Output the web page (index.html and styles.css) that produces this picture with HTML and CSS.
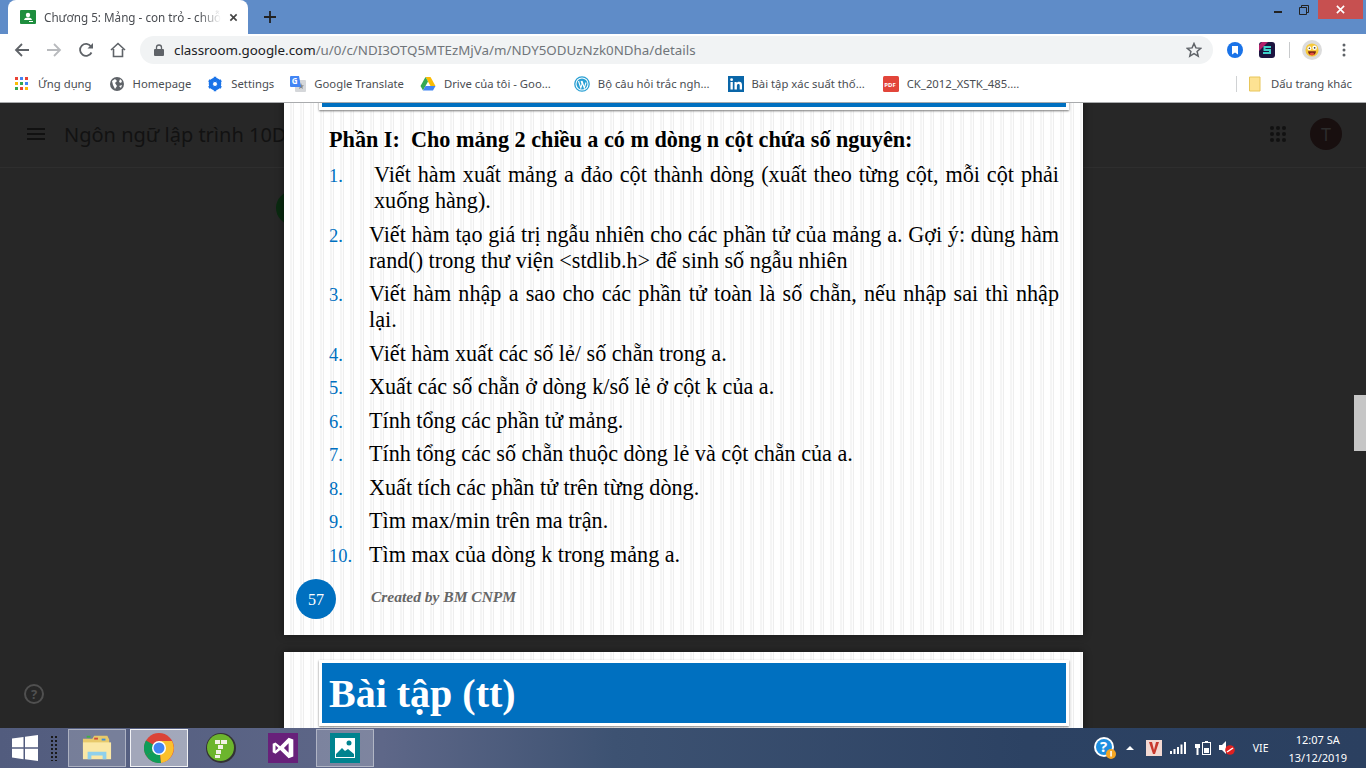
FILE: index.html
```html
<!DOCTYPE html>
<html lang="vi">

<head>
    <meta charset="UTF-8">
    <title>Chương 5: Mảng - con trỏ - chuỗi</title>
    <link rel="stylesheet" href="styles.css">
</head>

<body>
    <div class="tabstrip">
        <div class="tab">
            <svg class="ic16" viewBox="0 0 16 16"><rect width="16" height="14" y="1" rx="1" fill="#1e8e3e"/><circle cx="8" cy="6" r="2.2" fill="#fff"/><path d="M4 11c.5-2 2-2.6 4-2.6s3.500.6 4 2.600z" fill="#fff"/><rect x="9" y="12" width="4" height="1" fill="#fff"/></svg>
            <span class="tab-title">Chương 5: Mảng - con trỏ - chuỗ</span>
            <svg class="tab-x" viewBox="0 0 10 10"><path d="M1.500 1.500l7 7M8.500 1.500l-7 7" stroke="#444" stroke-width="1.800"/></svg>
        </div>
        <svg class="new-tab" viewBox="0 0 12 12"><path d="M6 0v12M0 6h12" stroke="#222" stroke-width="1.800"/></svg>
        <div class="win-btns">
            <svg class="win-min" viewBox="0 0 8 2"><rect width="8" height="2" fill="#222"/></svg>
            <svg class="win-max" viewBox="0 0 10 10"><path d="M.5 2.500h7v7h-7zM2.500 2.500v-2h7v7h-2" fill="none" stroke="#222"/></svg>
            <div class="win-close"><svg viewBox="0 0 10 10"><path d="M1 1l8 8M9 1l-8 8" stroke="#fff" stroke-width="1.800"/></svg></div>
        </div>
    </div>

    <div class="toolbar">
        <svg class="nav" viewBox="0 0 16 16"><path d="M15 8H2M8 2L2 8l6 6" fill="none" stroke="#5f6368" stroke-width="1.800"/></svg>
        <svg class="nav" viewBox="0 0 16 16"><path d="M1 8h13M8 2l6 6-6 6" fill="none" stroke="#b8babd" stroke-width="1.800"/></svg>
        <svg class="nav" viewBox="0 0 16 16"><path d="M13.500 10.500A6 6 0 1 1 13 4.500" fill="none" stroke="#5f6368" stroke-width="1.800"/><path d="M15 1v5.500H9.500z" fill="#5f6368"/></svg>
        <svg class="nav" viewBox="0 0 16 16"><path d="M1 8l7-6.500L15 8M3.500 7v7.500h9V7" fill="none" stroke="#5f6368" stroke-width="1.600"/></svg>
        <div class="omnibox">
            <svg class="lock" viewBox="0 0 10 12"><path d="M2.500 5V3.500a2.500 2.500 0 0 1 5 0V5" fill="none" stroke="#5f6368" stroke-width="1.300"/><rect y="5" width="10" height="7" rx="1" fill="#5f6368"/></svg>
            <span class="url"><b>classroom.google.com</b>/u/0/c/NDI3OTQ5MTEzMjVa/m/NDY5ODUzNzk0NDha/details</span>
            <svg class="star" viewBox="0 0 16 16"><path d="M8 1.500l1.900 4.400 4.800.4-3.600 3.100 1.100 4.700L8 11.600l-4.200 2.500 1.100-4.700L1.300 6.300l4.800-.4z" fill="none" stroke="#5f6368" stroke-width="1.500"/></svg>
        </div>
        <svg class="ext ext-first" viewBox="0 0 16 16"><circle cx="8" cy="8" r="8" fill="#1a73e8"/><path d="M5 4h6v8.500l-3-2-3 2z" fill="#fff"/></svg>
        <svg class="ext" viewBox="0 0 16 16"><rect width="16" height="16" rx="3" fill="#1c1440"/><path d="M0 3l3-3h6L0 9z" fill="#b3206a"/><path d="M12 5H5.500v3H11v3H4" fill="none" stroke="#3fd0c9" stroke-width="2"/></svg>
        <div class="tool-sep"></div>
        <div class="avatar">
            <svg viewBox="0 0 16 16"><circle cx="8" cy="8" r="7.500" fill="#f6c83a"/><circle cx="5" cy="6" r="2.200" fill="#fff"/><circle cx="11" cy="5.500" r="2.600" fill="#fff"/><circle cx="5" cy="6" r=".9" fill="#333"/><circle cx="11" cy="5.500" r="1" fill="#333"/><path d="M3.500 9.500h9c0 3-2 4.500-4.500 4.500s-4.500-1.500-4.500-4.500z" fill="#7a2418"/><ellipse cx="8" cy="12.500" rx="2.500" ry="1.500" fill="#e8503c"/></svg>
        </div>
        <svg class="dots" viewBox="0 0 4 14"><circle cx="2" cy="2" r="1.500" fill="#5f6368"/><circle cx="2" cy="7" r="1.500" fill="#5f6368"/><circle cx="2" cy="12" r="1.500" fill="#5f6368"/></svg>
    </div>

    <div class="bookmarks">
        <div class="bm bm-apps">
            <svg class="ic14" viewBox="0 0 14 14"><g id="app-dots"><rect width="3" height="3" fill="#ea4335"/><rect x="5" width="3" height="3" fill="#4285f4"/><rect x="10" width="3" height="3" fill="#ea4335"/><rect y="5" width="3" height="3" fill="#fbbc05"/><rect x="5" y="5" width="3" height="3" fill="#34a853"/><rect x="10" y="5" width="3" height="3" fill="#4285f4"/><rect y="10" width="3" height="3" fill="#34a853"/><rect x="5" y="10" width="3" height="3" fill="#ea4335"/><rect x="10" y="10" width="3" height="3" fill="#fbbc05"/></g></svg>
            <span>Ứng dụng</span>
        </div>
        <div class="bm bm-home">
            <svg class="ic16" viewBox="0 0 16 16"><circle cx="8" cy="8" r="7" fill="#5f6368"/><path d="M3 5l3-2 2 2-2 2 2 3-2 3-2-4zM11 3l2 2-1 2-2-1zM10 10l3-1-1 3z" fill="#fff"/></svg>
            <span>Homepage</span>
        </div>
        <div class="bm bm-settings">
            <svg class="ic16" viewBox="0 0 16 16"><circle cx="8" cy="8" r="4.500" fill="none" stroke="#1a73e8" stroke-width="3.500"/><path d="M8 .8v14.400M1.800 4.400l12.400 7.200M14.200 4.400L1.800 11.600" stroke="#1a73e8" stroke-width="2.600"/><circle cx="8" cy="8" r="2" fill="#fff"/></svg>
            <span>Settings</span>
        </div>
        <div class="bm bm-translate">
            <svg class="ic16" viewBox="0 0 16 16"><rect x="5" y="4" width="11" height="12" rx="1" fill="#d5d7da"/><path d="M11 7l.8 2.200 2.200.2-1.700 1.400.6 2.200-1.900-1.200-1.900 1.200.6-2.200L8 9.400l2.200-.2z" fill="#80868b"/><path d="M1 0h8l2 11H1a1 1 0 0 1-1-1V1a1 1 0 0 1 1-1z" fill="#4285f4"/><text x="1.800" y="8" class="g-mark">G</text></svg>
            <span>Google Translate</span>
        </div>
        <div class="bm bm-drive">
            <svg class="ic16" viewBox="0 0 16 16"><path d="M5.500 1h5l5 9h-5z" fill="#fbbc05"/><path d="M5.500 1L.5 10l2.500 4.500L8 5.500z" fill="#34a853"/><path d="M3 14.500h10l2.500-4.500h-10z" fill="#4285f4"/></svg>
            <span>Drive của tôi - Goo...</span>
        </div>
        <div class="bm bm-wp">
            <svg class="ic16" viewBox="0 0 16 16"><circle cx="8" cy="8" r="7.200" fill="none" stroke="#2aa0d4" stroke-width="1.300"/><circle cx="8" cy="8" r="5.500" fill="#2aa0d4"/><path d="M4.500 5l2.300 7 1.300-4-1-3M8 5l2.300 7 1.700-5.500" fill="none" stroke="#fff" stroke-width="1.100"/></svg>
            <span>Bộ câu hỏi trắc ngh...</span>
        </div>
        <div class="bm bm-in">
            <svg class="ic16" viewBox="0 0 16 16"><rect width="16" height="16" fill="#0a66a8"/><rect x="2.500" y="6" width="2.300" height="7.500" fill="#fff"/><circle cx="3.600" cy="3.700" r="1.400" fill="#fff"/><path d="M6.500 6h2.200v1.100c.5-.8 1.300-1.300 2.400-1.300 2 0 2.900 1.200 2.900 3.300v4.400h-2.300V9.600c0-1.100-.4-1.700-1.200-1.700-.9 0-1.600.6-1.600 1.800v3.800H6.500z" fill="#fff"/></svg>
            <span>Bài tập xác suất thố...</span>
        </div>
        <div class="bm bm-pdf">
            <svg class="ic16" viewBox="0 0 16 16"><rect width="16" height="16" rx="1.500" fill="#e2453a"/><text x="1.300" y="10.500" class="pdf-mark">PDF</text></svg>
            <span>CK_2012_XSTK_485....</span>
        </div>
        <div class="bm-right">
            <div class="bm-sep"></div>
            <svg class="ic16 bm-folder" viewBox="0 0 12 15"><path d="M.5.500h10.500v14H.5z" fill="#fde293" stroke="#e8c65a"/></svg>
            <span>Dấu trang khác</span>
        </div>
    </div>

    <main class="page">
        <div class="backdrop">
            <div class="class-bar">
                <svg class="burger" viewBox="0 0 18 12"><path d="M0 1h18M0 6h18M0 11h18" stroke="#111" stroke-width="2"/></svg>
                <span class="class-name">Ngôn ngữ lập trình 10DHTH2</span>
                <svg class="grid-dots" viewBox="0 0 16 16"><g fill="#111"><circle cx="2" cy="2" r="2"/><circle cx="8" cy="2" r="2"/><circle cx="14" cy="2" r="2"/><circle cx="2" cy="8" r="2"/><circle cx="8" cy="8" r="2"/><circle cx="14" cy="8" r="2"/><circle cx="2" cy="14" r="2"/><circle cx="8" cy="14" r="2"/><circle cx="14" cy="14" r="2"/></g></svg>
                <div class="user-dot">T</div>
            </div>
            <div class="green-dot"></div>
            <div class="help-dot">?</div>
        </div>

        <div class="viewer">
            <section class="slide slide-one">
                <div class="slide-title"></div>
                <h2 class="part">Phần I:&nbsp; Cho mảng 2 chiều a có m dòng n cột chứa số nguyên:</h2>
                <ol class="tasks">
                    <li class="task-first"><span class="num">1.</span><span>Viết hàm xuất mảng a đảo cột thành dòng (xuất theo từng cột, mỗi cột phải xuống hàng).</span></li>
                    <li><span class="num">2.</span><span>Viết hàm tạo giá trị ngẫu nhiên cho các phần tử của mảng a. Gợi ý: dùng hàm rand() trong thư viện &lt;stdlib.h&gt; để sinh số ngẫu nhiên</span></li>
                    <li><span class="num">3.</span><span>Viết hàm nhập a sao cho các phần tử toàn là số chẵn, nếu nhập sai thì nhập lại.</span></li>
                    <li><span class="num">4.</span><span>Viết hàm xuất các số lẻ/ số chẵn trong a.</span></li>
                    <li><span class="num">5.</span><span>Xuất các số chẵn ở dòng k/số lẻ ở cột k của a.</span></li>
                    <li><span class="num">6.</span><span>Tính tổng các phần tử mảng.</span></li>
                    <li><span class="num">7.</span><span>Tính tổng các số chẵn thuộc dòng lẻ và cột chẵn của a.</span></li>
                    <li><span class="num">8.</span><span>Xuất tích các phần tử trên từng dòng.</span></li>
                    <li><span class="num">9.</span><span>Tìm max/min trên ma trận.</span></li>
                    <li><span class="num">10.</span><span>Tìm max của dòng k trong mảng a.</span></li>
                </ol>
                <div class="slide-foot">
                    <div class="page-no">57</div>
                    <span class="credit">Created by BM CNPM</span>
                </div>
            </section>
            <section class="slide slide-two">
                <h1 class="slide-head">Bài tập (tt)</h1>
            </section>
        </div>

        <div class="scroll-thumb"></div>
    </main>

    <footer class="taskbar">
        <svg class="win-logo" viewBox="0 0 26 26"><path d="M0 3.500l11.500-1.600v10.400H0zM13 1.700L26 0v12.300H13zM0 13.800h11.500v10.400L0 22.500zM13 13.800h13V26l-13-1.800z" fill="#fff"/></svg>
        <div class="gripper"></div>
        <div class="tb-item tb-open">
            <svg viewBox="0 0 32 28"><path d="M1 4h10l2-3h14l2 4v10H1z" fill="#e8c96a"/><rect x="5" y="1" width="4" height="2" fill="#3fae49"/><rect x="13" y="3" width="4" height="2" fill="#d04a3a"/><rect x="21" y="4" width="4" height="2" fill="#3f8fd8"/><path d="M1 8h30v18H1z" fill="#fbe8a6"/><path d="M6 26v-8h20v8h-4v-4H10v4z" fill="#8fd0ec"/></svg>
        </div>
        <div class="tb-item tb-active">
            <svg viewBox="0 0 30 30"><circle cx="15" cy="15" r="15" fill="#db4437"/><path d="M15 15L2 22.500A15 15 0 0 1 2 7.500z" fill="#0f9d58"/><path d="M15 15l-13 7.500A15 15 0 0 0 17 29.900z" fill="#0f9d58"/><path d="M15 8h13a15 15 0 0 1-11 21.900z" fill="#fbc02d"/><circle cx="15" cy="15" r="7" fill="#fff"/><circle cx="15" cy="15" r="5.500" fill="#4285f4"/></svg>
        </div>
        <div class="tb-item">
            <svg viewBox="0 0 30 30"><circle cx="15" cy="15" r="15" fill="#333"/><circle cx="14.500" cy="14.500" r="13.500" fill="#6cb52d"/><path d="M9 7h5v4H9zM15 7h6v4h-6zM12 12h5v4h-5zM10 17h5v4h-5zM9 22h5v3H9z" fill="#f2f2e4"/></svg>
        </div>
        <div class="tb-item">
            <svg viewBox="0 0 32 32"><rect width="32" height="32" fill="#68217a"/><path d="M22 5l5 2v18l-5 2-9-9-5 4-3-1.500v-9L8 10l5 4zM8 13v6l3-3zM22 11l-5 5 5 5z" fill="#fff" fill-rule="evenodd"/></svg>
        </div>
        <div class="tb-item tb-open">
            <svg viewBox="0 0 30 30"><rect width="30" height="30" fill="#00838f"/><rect x="5" y="5" width="20" height="20" fill="#fff"/><path d="M6 21l6-6 3 3 3-2 6 5v3H6z" fill="#00838f"/><circle cx="19" cy="10" r="2.500" fill="#00838f"/></svg>
        </div>
        <div class="tray">
            <svg class="tray-help" viewBox="0 0 24 24"><circle cx="11" cy="11" r="10" fill="#fff"/><circle cx="11" cy="11" r="8" fill="#1f8fe0"/><text x="7" y="16" class="help-mark">?</text><circle cx="18" cy="18" r="5" fill="#f5a623"/><rect x="17.300" y="15" width="1.500" height="5.500" fill="#fff"/></svg>
            <svg class="tray-up" viewBox="0 0 8 4"><path d="M0 4l4-4 4 4z" fill="#fff"/></svg>
            <svg class="tray-v" viewBox="0 0 16 16"><rect width="16" height="16" fill="#f3d9d2"/><path d="M3 2h3l2 8 2-8h3l-4 12H7z" fill="#c8392e"/></svg>
            <svg class="tray-signal" viewBox="0 0 16 12"><path d="M0 9h2v3H0zM3.500 7h2v5h-2zM7 5h2v7H7zM10.500 2.500h2V12h-2zM14 0h2v12h-2z" fill="#fff"/></svg>
            <svg class="tray-batt" viewBox="0 0 16 14"><path d="M1 0v3M4 0v3M0 3h5v4H3.500v7h-2V7H0z" fill="#fff"/><rect x="7.500" y="1.500" width="8" height="12" fill="none" stroke="#fff"/><rect x="9" y="7" width="5" height="5" fill="#fff"/><rect x="10" y="0" width="3" height="1.500" fill="#fff"/></svg>
            <svg class="tray-vol" viewBox="0 0 16 14"><path d="M0 4h3l4-4v13L3 9H0z" fill="#fff"/><circle cx="11" cy="9" r="4.800" fill="#e02020"/><path d="M8 11l6-4" stroke="#fff" stroke-width="1.500"/></svg>
            <span class="tray-lang">VIE</span>
            <div class="clock"><div>12:07 SA</div><div>13/12/2019</div></div>
        </div>
    </footer>
</body>

</html>
```

FILE: styles.css
```css
* {
    box-sizing: border-box;
}

html,
body {
    margin: 0;
    padding: 0;
    height: 768px;
    overflow: hidden;
}

body {
    display: flex;
    flex-direction: column;
    width: 1366px;
    font-family: 'Noto Sans', 'Open Sans', sans-serif;
    background-color: #272727;
}

svg {
    display: block;
    flex-shrink: 0;
}

.ic14 {
    width: 14px;
    height: 14px;
}

.ic16 {
    width: 16px;
    height: 16px;
}

/* tab strip */
.tabstrip {
    height: 34px;
    background-color: #5f8cc8;
    display: flex;
    align-items: flex-end;
    padding-left: 8px;
    flex-shrink: 0;
}

.tab {
    width: 240px;
    height: 34px;
    background-color: #fff;
    border-radius: 8px 8px 0 0;
    display: flex;
    align-items: center;
    padding: 0 11px 0 12px;
}

.tab-title {
    flex: 1;
    font-size: 11.700px;
    color: #4a4d52;
    margin-left: 8px;
    white-space: nowrap;
    -webkit-mask-image: linear-gradient(to right, #000 88%, transparent);
    mask-image: linear-gradient(to right, #000 88%, transparent);
}

.tab-x {
    width: 9px;
    height: 9px;
    margin-left: 8px;
}

.new-tab {
    width: 12px;
    height: 12px;
    margin: 0 0 11px 16px;
}

.win-btns {
    margin-left: auto;
    align-self: flex-start;
    display: flex;
    align-items: center;
    height: 19px;
    padding-right: 3px;
}

.win-min {
    width: 8px;
    height: 2px;
    margin-top: 4px;
}

.win-max {
    width: 10px;
    height: 10px;
    margin-left: 17px;
}

.win-close {
    width: 45px;
    height: 19px;
    background-color: #c75050;
    display: flex;
    align-items: center;
    justify-content: center;
    margin-left: 9px;
}

.win-close svg {
    width: 9px;
    height: 9px;
}

/* toolbar */
.toolbar {
    height: 33px;
    background-color: #fff;
    display: flex;
    align-items: center;
    padding: 0 15px 2px 14px;
    flex-shrink: 0;
}

.nav {
    width: 16px;
    height: 16px;
    margin-right: 16px;
}

.omnibox {
    width: 1073px;
    height: 28px;
    margin-left: -2px;
    background-color: #f1f3f4;
    border-radius: 14px;
    display: flex;
    align-items: center;
    padding: 0 11px 0 14px;
}

.lock {
    width: 10px;
    height: 12px;
}

.url {
    margin-left: 10px;
    font-size: 13.350px;
    color: #70757a;
    white-space: nowrap;
}

.url b {
    font-weight: 400;
    color: #202124;
}

.star {
    width: 16px;
    height: 16px;
    margin-left: auto;
}

.ext {
    width: 16px;
    height: 16px;
    margin-left: 16px;
}

.ext-first {
    margin-left: 14px;
}

.tool-sep {
    width: 1px;
    height: 16px;
    background-color: #c8cacc;
    margin-left: 14px;
}

.avatar {
    width: 20px;
    height: 20px;
    border-radius: 50%;
    background-color: #dcdcdc;
    padding: 3px;
    margin-left: 12px;
}

.avatar svg {
    width: 14px;
    height: 14px;
}

.dots {
    width: 4px;
    height: 14px;
    margin-left: 20px;
}

/* bookmarks */
.bookmarks {
    height: 36px;
    background-color: #fff;
    border-bottom: 1px solid #a9abad;
    display: flex;
    align-items: center;
    font-size: 11.300px;
    color: #4a4d52;
    padding: 0 14px 2px 15px;
    flex-shrink: 0;
}

.bm,
.bm-right {
    display: flex;
    align-items: center;
    white-space: nowrap;
}

.bm span {
    margin-left: 8px;
}

.bm-apps span {
    margin-left: 9px;
}

.bm-home {
    margin-left: 17px;
}

.bm-settings {
    margin-left: 16px;
}

.bm-translate {
    margin-left: 16px;
}

.bm-drive {
    margin-left: 16px;
}

.bm-wp {
    margin-left: 23px;
}

.bm-in {
    margin-left: 18px;
}

.bm-pdf {
    margin-left: 18px;
}

.bm-right {
    margin-left: auto;
}

.bm-sep {
    width: 1px;
    height: 16px;
    background-color: #d0d2d4;
    margin-right: 12px;
}

.bm-folder {
    width: 12px;
    margin-right: 10px;
}

.g-mark {
    font-size: 8px;
    font-weight: 700;
    fill: #fff;
}

.pdf-mark {
    font-size: 6px;
    font-weight: 700;
    fill: #fff;
}

/* dimmed classroom page and the file viewer above it */
.page {
    flex: 1;
    position: relative;
    overflow: hidden;
}

.backdrop {
    height: 100%;
    background-color: #272727;
}

.class-bar {
    height: 65px;
    border-bottom: 1px solid #2e2e2e;
    display: flex;
    align-items: center;
    padding: 0 24px 2px 27px;
    color: #111;
}

.burger {
    width: 18px;
    height: 12px;
}

.class-name {
    font-size: 20px;
    margin-left: 19px;
    white-space: nowrap;
    color: #121212;
}

.grid-dots {
    width: 16px;
    height: 16px;
    margin-left: auto;
}

.user-dot {
    width: 32px;
    height: 32px;
    border-radius: 50%;
    background-color: #180f0f;
    color: #2c2c2c;
    font-size: 18px;
    text-align: center;
    line-height: 32px;
    margin-left: 24px;
}

.green-dot {
    position: absolute;
    left: 276px;
    top: 88px;
    width: 34px;
    height: 34px;
    border-radius: 50%;
    background-color: #0a2a10;
}

.help-dot {
    position: absolute;
    left: 24px;
    top: 581px;
    width: 20px;
    height: 20px;
    border: 2px solid #505050;
    border-radius: 50%;
    color: #505050;
    font-size: 13px;
    font-weight: 700;
    text-align: center;
    line-height: 16px;
}

.viewer {
    position: absolute;
    left: 284px;
    top: -100px;
    width: 799px;
}

.slide {
    background-color: #fff;
    background-image: repeating-linear-gradient(to right, #fff 0, #fff 6px, #f5f5f5 6px, #f5f5f5 8px, #fdfdfd 8px, #fdfdfd 9px, #eee 9px, #eee 10px);
    box-shadow: 0 0 8px rgba(0, 0, 0, 0.45);
    font-family: 'Liberation Serif', serif;
    color: #000;
}

.slide-one {
    height: 632px;
    padding: 100px 0 0;
    position: relative;
    margin-bottom: 17px;
}

.slide-title {
    position: absolute;
    left: 35px;
    right: 14px;
    top: 0;
    height: 107px;
    background-color: #0070c0;
    border: 3px solid #fff;
    box-shadow: 0 1px 2px #777;
}

.part {
    margin: 0;
    padding: 24px 0 0 45px;
    font-size: 22.200px;
    line-height: 26px;
    font-weight: 700;
    white-space: nowrap;
}

.tasks {
    list-style: none;
    margin: 9px 24px 0 45px;
    padding: 0;
    font-size: 22.150px;
    line-height: 26px;
}

.tasks li {
    display: grid;
    grid-template-columns: 40px 1fr;
    align-items: baseline;
    margin-bottom: 7.500px;
    text-align: justify;
}

.tasks .task-first {
    grid-template-columns: 45px 1fr;
}

.num {
    color: #0070c0;
    font-size: 18.500px;
    line-height: 1;
}

.slide-foot {
    display: flex;
    align-items: center;
    position: absolute;
    left: 12px;
    top: 576px;
}

.page-no {
    width: 40px;
    height: 40px;
    border-radius: 50%;
    background-color: #0070c0;
    color: #fff;
    font-size: 16px;
    text-align: center;
    line-height: 42px;
}

.credit {
    margin: -4px 0 0 35px;
    font-size: 15.500px;
    font-weight: 700;
    font-style: italic;
    color: #666;
}

.slide-two {
    height: 120px;
    padding: 8px 14px 0 35px;
}

.slide-head {
    margin: 0;
    height: 66px;
    background-color: #0070c0;
    border: 3px solid #fff;
    box-shadow: 0 1px 2px #777;
    color: #fff;
    font-size: 40px;
    line-height: 62px;
    padding-left: 7px;
    font-weight: 700;
    white-space: nowrap;
}

.scroll-thumb {
    position: absolute;
    right: 0;
    top: 292px;
    width: 12px;
    height: 56px;
    background-color: #c6c6c6;
}

/* taskbar */
.taskbar {
    height: 40px;
    flex-shrink: 0;
    display: flex;
    align-items: center;
    background-color: #33496b;
    background-image: linear-gradient(to right, #525c7e 0, #5e6788 28%, #3d5272 45%, #2c4263 75%, #2b4060 100%);
    padding-left: 12px;
}

.win-logo {
    width: 26px;
    height: 26px;
}

.gripper {
    width: 8px;
    height: 26px;
    margin-left: 12px;
    background-image: radial-gradient(circle, #1a1a1a 1px, transparent 1.200px);
    background-size: 4px 4px;
}

.tb-item {
    width: 58px;
    height: 38px;
    margin-left: 4px;
    display: flex;
    align-items: center;
    justify-content: center;
}

.tb-item svg {
    width: 30px;
    height: 30px;
}

.gripper + .tb-item {
    margin-left: 10px;
}

.tb-open {
    background-color: rgba(255, 255, 255, 0.2);
    border: 1px solid rgba(255, 255, 255, 0.4);
}

.tb-active {
    background-color: rgba(255, 255, 255, 0.45);
    border: 1px solid rgba(255, 255, 255, 0.85);
}

.tray {
    margin-left: auto;
    display: flex;
    align-items: center;
    color: #fff;
    font-size: 11px;
    padding-right: 19px;
}

.tray-help {
    width: 24px;
    height: 24px;
}

.help-mark {
    font-size: 15px;
    font-weight: 700;
    fill: #fff;
}

.tray-up {
    width: 8px;
    height: 4px;
    margin-left: 9px;
}

.tray-v {
    width: 16px;
    height: 16px;
    margin-left: 12px;
}

.tray-signal {
    width: 16px;
    height: 12px;
    margin-left: 8px;
}

.tray-batt {
    width: 16px;
    height: 14px;
    margin-left: 9px;
}

.tray-vol {
    width: 16px;
    height: 14px;
    margin-left: 8px;
}

.tray-lang {
    margin-left: 18px;
    font-size: 10.500px;
}

.clock {
    margin-left: 20px;
    padding-top: 2px;
    text-align: center;
    line-height: 18px;
}
```
